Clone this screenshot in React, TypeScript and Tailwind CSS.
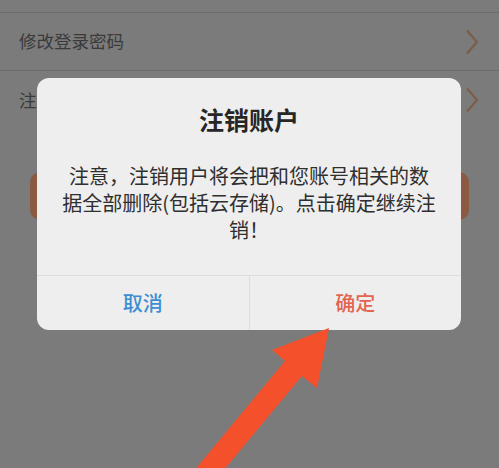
import { type ReactNode } from "react";

const font = { fontFamily: '"Noto Sans CJK SC", "Noto Sans", sans-serif' };

// Dimmed settings row sitting under the modal mask
function SettingRow({ label, last }: { label: string; last?: boolean }) {
  return (
    <div
      className={
        "flex h-[58px] items-center justify-between pl-[19px] pr-[20px]" +
        (last ? "" : " border-b border-[#6c6c6c]")
      }
    >
      <span className="text-[17.5px] text-[#3a3a3a]">{label}</span>
      <svg width="14" height="26" viewBox="0 0 14 26" fill="none">
        <path d="M2 1.5 L12 13 L2 24.5" stroke="#7d5c48" strokeWidth="2.2" />
      </svg>
    </div>
  );
}

function DialogButton({ children, color }: { children: ReactNode; color: string }) {
  return (
    <button className={"flex-1 h-full text-[20px] font-medium " + color}>
      {children}
    </button>
  );
}

export default function App() {
  return (
    <div className="relative h-[468px] w-[499px] overflow-hidden bg-[#7b7b7b]" style={font}>
      {/* page behind the mask */}
      <div className="h-[13px] border-b border-[#6c6c6c]" />
      <SettingRow label="修改登录密码" />
      <SettingRow label="注销账户" last />
      <div className="px-[30px] pt-[43px]">
        <div className="h-[48px] rounded-[10px] bg-[#8a5a43]" />
      </div>

      {/* confirm dialog */}
      <div className="absolute left-[37px] top-[78px] flex h-[252px] w-[424px] flex-col rounded-[12px] bg-[#eeeeee]">
        <div className="flex flex-1 flex-col items-center pt-[25px]">
          <h2 className="text-[25px] font-bold leading-[32px] text-[#262626]">注销账户</h2>
          <p className="mt-[27px] text-center text-[20px] leading-[27px] text-[#2f2f2f]">
            <span className="block">注意，注销用户将会把和您账号相关的数</span>
            <span className="block">据全部删除(包括云存储)。点击确定继续注</span>
            <span className="block">销！</span>
          </p>
        </div>
        <div className="flex h-[55px] border-t border-[#dcdcdc]">
          <DialogButton color="text-[#3d8ed2]">取消</DialogButton>
          <div className="w-px bg-[#dcdcdc]" />
          <DialogButton color="text-[#e2644f]">确定</DialogButton>
        </div>
      </div>

      {/* pointer arrow */}
      <svg className="absolute left-0 top-0" width="499" height="468" viewBox="0 0 499 468">
        <polygon
          points="329,328 317,388 302,376 204,494 188,478 285,361 272,350"
          fill="#f5502c"
        />
      </svg>
    </div>
  );
}
